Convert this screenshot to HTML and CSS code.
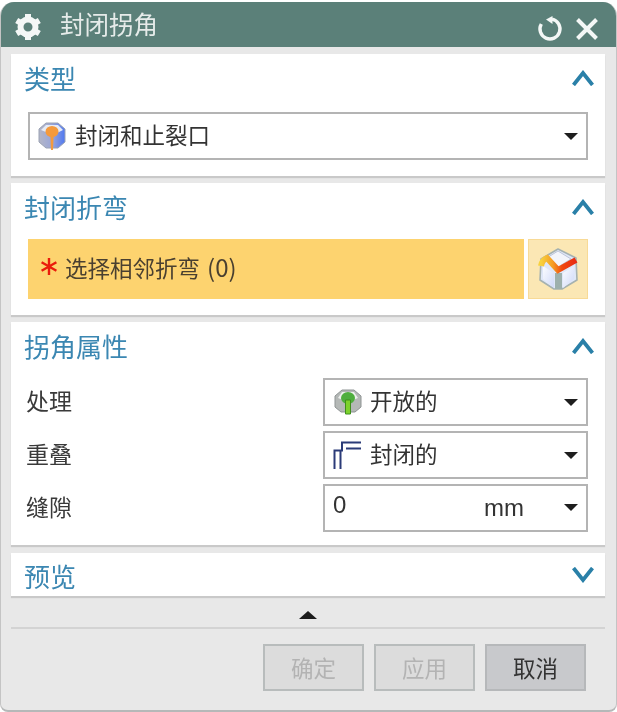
FILE: index.html
```html
<!DOCTYPE html>
<html lang="zh">
<head>
<meta charset="utf-8">
<title>封闭拐角</title>
<link rel="stylesheet" href="styles.css">
</head>
<body>
<div class="dialog">
  <header class="titlebar">
    <svg class="gear" viewBox="0 0 30 30" width="30" height="30"><g fill="none" stroke="#f4f7f6"><circle cx="15" cy="15" r="7.500" stroke-width="6"/><path stroke-width="6" d="M15 2v6M15 22v6M3.700 8.500l5.200 3M21.100 18.500l5.200 3M3.700 21.500l5.200-3M21.100 11.500l5.200-3"/></g></svg>
    <span class="title">封闭拐角</span>
    <svg class="reset" viewBox="0 0 26 26" width="26" height="26"><path fill="none" stroke="#f4f7f6" stroke-width="3.400" d="M4.300 8A10 10 0 1 0 15 3.200"/><path fill="#f4f7f6" d="M9 3.500L15.500 0v8z"/></svg>
    <svg class="close" viewBox="0 0 24 24" width="24" height="24"><path stroke="#f4f7f6" stroke-width="4" d="M2.500 2.500l19 19M21.500 2.500l-19 19"/></svg>
  </header>
  <div class="content">
    <section class="panel panel-type">
      <div class="panel-head"><h2>类型</h2><svg class="chev" viewBox="0 0 22 16" width="22" height="16"><path fill="none" stroke="#2a80a8" stroke-width="3.800" d="M1.500 15L11 3l9.500 12"/></svg></div>
      <div class="select wide">
        <svg class="ico" viewBox="0 0 30 30" width="30" height="30"><defs><linearGradient id="g1" x1="0" x2="1" y1="0" y2="0"><stop offset="0" stop-color="#b4b6c6"/><stop offset=".5" stop-color="#9aa6d8"/><stop offset="1" stop-color="#4f78f2"/></linearGradient></defs><path fill="url(#g1)" stroke="#9aa2b4" stroke-linejoin="round" d="M9 2h12l7 6v13l-7 6H9l-7-6V8z"/><path fill="#e6ebf5" d="M9 4h12l5 5-10 5L4 9z"/><ellipse cx="15" cy="10.500" rx="6.500" ry="5.500" fill="#f59a3c"/><path fill="#f39a3e" d="M13.300 13h3.400l-.7 16h-2z"/></svg>
        <span class="val">封闭和止裂口</span><i class="caret"></i>
      </div>
    </section>
    <section class="panel panel-bend">
      <div class="panel-head"><h2>封闭折弯</h2><svg class="chev" viewBox="0 0 22 16" width="22" height="16"><path fill="none" stroke="#2a80a8" stroke-width="3.800" d="M1.500 15L11 3l9.500 12"/></svg></div>
      <div class="pick">
        <div class="pick-label">
          <svg class="star" viewBox="0 0 16 17" width="16" height="17"><path stroke="#ea1c0c" stroke-width="2.400" d="M8 0v17M.6 4.200l14.800 8.600M15.400 4.200L.6 12.800"/></svg>
          <span>选择相邻折弯 <span class="count">(0)</span></span>
        </div>
        <div class="pick-btn">
          <svg viewBox="0 0 44 44" width="44" height="44"><defs><linearGradient id="band" x1="0" x2="1" y1="0" y2="0"><stop offset="0" stop-color="#f8d23e"/><stop offset=".35" stop-color="#f59a22"/><stop offset=".6" stop-color="#f0480f"/><stop offset="1" stop-color="#e92b12"/></linearGradient><linearGradient id="fl" x1="0" x2="1" y1="0" y2="1"><stop offset="0" stop-color="#fbfcff"/><stop offset="1" stop-color="#cfd9f8"/></linearGradient></defs><path fill="#dfe7f8" stroke="#a6b2b0" stroke-width="1.600" stroke-linejoin="round" d="M22 2l18 9 1 22-15 9h-8L4 33l1-21z"/><path fill="#f3f5fb" stroke="#bcc4d8" d="M22 4l13 8-13 8-13-8z"/><path fill="url(#fl)" d="M7 19l11 7v15L7 32z"/><path fill="url(#fl)" d="M27 26l11-7v13l-11 9z"/><path fill="#9db0ac" d="M19 26h7v16h-7z"/><path fill="none" stroke="url(#band)" stroke-width="6" d="M5 19q1-6 6-8l11 12 18-10"/></svg>
        </div>
      </div>
    </section>
    <section class="panel panel-attr">
      <div class="panel-head"><h2>拐角属性</h2><svg class="chev" viewBox="0 0 22 16" width="22" height="16"><path fill="none" stroke="#2a80a8" stroke-width="3.800" d="M1.500 15L11 3l9.500 12"/></svg></div>
      <div class="rows">
        <div class="row"><label>处理</label><div class="select small">
          <svg class="ico" viewBox="0 0 30 30" width="30" height="30"><path fill="#b4b8b6" stroke="#8f9494" stroke-linejoin="round" d="M9 3h12l7 6v11l-6 5H8l-6-5V9z"/><path fill="#eef0ee" d="M9 5h12l4 6-10 4-10-4z"/><ellipse cx="15" cy="11" rx="7" ry="6" fill="#4fae3e"/><path fill="#7dd12c" stroke="#3f8f1c" d="M12.500 13h5v14h-5z"/></svg>
          <span class="val">开放的</span><i class="caret"></i></div></div>
        <div class="row"><label>重叠</label><div class="select small">
          <svg class="ico" viewBox="0 0 30 30" width="30" height="30"><path fill="none" stroke="#2b3b78" stroke-width="2" d="M1.500 29V10.500H9V2.500H28M7.500 29V11M13 8.500H28"/></svg>
          <span class="val">封闭的</span><i class="caret"></i></div></div>
        <div class="row"><label>缝隙</label><div class="select small input">
          <span class="num">0</span><span class="unit">mm</span><i class="caret"></i></div></div>
      </div>
    </section>
    <section class="panel panel-preview">
      <div class="panel-head"><h2>预览</h2><svg class="chev" viewBox="0 0 22 16" width="22" height="16"><path fill="none" stroke="#2a80a8" stroke-width="3.800" d="M1.500 1L11 13l9.500-12"/></svg></div>
    </section>
    <div class="expander"><i class="caret-up"></i></div>
    <footer class="actions">
      <button class="btn" disabled>确定</button>
      <button class="btn" disabled>应用</button>
      <button class="btn primary">取消</button>
    </footer>
  </div>
</div>
</body>
</html>
```
FILE: styles.css
```css
* { box-sizing: border-box; }
html, body { margin: 0; padding: 0; height: 100%; background: #fff; }
body {
  font-family: "Noto Sans CJK SC", "Liberation Sans", sans-serif;
  color: #333;
  overflow: hidden;
}
.dialog {
  width: 617px;
  height: 710px;
  margin-top: 2px;
  background: #e8e8e8;
  border-radius: 14px 14px 8px 8px;
  border: 1px solid #c4c4c4;
  border-top: 0;
  border-bottom: 2px solid #b5b8b8;
  overflow: hidden;
  display: flex;
  flex-direction: column;
  filter: blur(0.5px);
}
.titlebar {
  height: 45px;
  flex: none;
  background: #5b8079;
  display: flex;
  align-items: center;
  padding: 0 14px 0 12px;
  color: #f2f5f4;
}
.title { font-size: 24.500px; line-height: 45px; margin-left: 17px; padding-bottom: 2px; flex: 1; opacity: .92; }
.gear { flex: none; margin-top: 5px; }
.reset { margin-right: 12px; margin-top: 8px; }
.close { margin-right: 3px; margin-top: 8px; }
.content {
  flex: 1;
  padding: 7px 11px 0 10px;
  display: flex;
  flex-direction: column;
}
.panel {
  background: #fff;
  box-shadow: 0 2px 1px #c9c9c9;
  padding: 0 17px;
}
.panel-type { height: 122px; margin-bottom: 7px; }
.panel-bend { height: 132px; margin-bottom: 7px; }
.panel-attr { height: 223px; margin-bottom: 8px; }
.panel-preview { height: 43px; }
.panel-head {
  height: 52px;
  display: flex;
  align-items: center;
  justify-content: space-between;
  margin: 0 0 0 -4px;
}
.panel-preview .panel-head { height: 47px; }
.panel-head h2 {
  margin: 0;
  font-size: 26px;
  font-weight: 400;
  color: #3b87b2;
  line-height: 52px;
  padding-bottom: 4px;
}
.panel-preview .panel-head h2 { padding-bottom: 2px; }
.chev { margin-right: -6px; margin-top: -4px; }
.select {
  height: 48px;
  border: 2px solid #b4b4b4;
  background: #fff;
  display: flex;
  align-items: center;
  padding: 0 8px 0 7px;
  font-size: 22.500px;
  color: #333;
}
.wide { margin-top: 6px; }
.panel-type .select { width: 560px; }
.ico { flex: none; margin-right: 8px; }
.val { flex: 1; padding-bottom: 4px; }
.small .ico { margin-right: 7px; }
.caret {
  flex: none;
  width: 0; height: 0;
  border-left: 7px solid transparent;
  border-right: 7px solid transparent;
  border-top: 7px solid #1e1e1e;
}
.pick { display: flex; gap: 4px; height: 60px; margin-top: 4px; }
.pick-label {
  width: 496px;
  background: #fdd36f;
  display: flex;
  align-items: center;
  padding: 0 0 6px 13px;
  font-size: 22.500px;
  color: #4a4030;
}
.star { flex: none; margin: 0 8px 0 0; }
.count { font-size: 24px; margin-left: 2px; }
.pick-btn {
  width: 60px;
  background: #fbe7b4;
  border: 1px solid #f8da96;
  display: flex;
  align-items: center;
  justify-content: center;
}
.rows { display: flex; flex-direction: column; gap: 5px; margin-top: 4px; }
.row { display: flex; align-items: center; justify-content: space-between; width: 560px; }
.row label { font-size: 23px; color: #3a3a3a; margin-left: -2px; padding-bottom: 4px; }
.small { width: 265px; padding-left: 8px; }
.input { padding-left: 8px; align-items: flex-start; }
.num { flex: 1; font-family: "Liberation Sans", sans-serif; font-size: 24px; line-height: 38px; }
.unit { font-family: "Liberation Sans", sans-serif; font-size: 24px; line-height: 44px; margin-right: 40px; }
.input .caret { margin-top: 18px; }
.expander {
  height: 33px;
  flex: none;
  display: flex;
  align-items: center;
  justify-content: center;
  border-bottom: 2px solid #d3d3d3;
}
.caret-up {
  width: 0; height: 0;
  margin-top: 6px;
  border-left: 9px solid transparent;
  border-right: 9px solid transparent;
  border-bottom: 8px solid #1c1c1c;
}
.actions {
  display: flex;
  justify-content: flex-end;
  gap: 10px;
  padding: 15px 19px 0 0;
}
.btn {
  width: 101px;
  height: 47px;
  padding: 0 0 2px;
  background: #dcdcdc;
  border: 2px solid #b8bcbc;
  font-family: inherit;
  font-size: 22.500px;
  color: #b3b3b3;
}
.primary { background: #c8c9cc; border-color: #b6b8ba; color: #333; }
```
